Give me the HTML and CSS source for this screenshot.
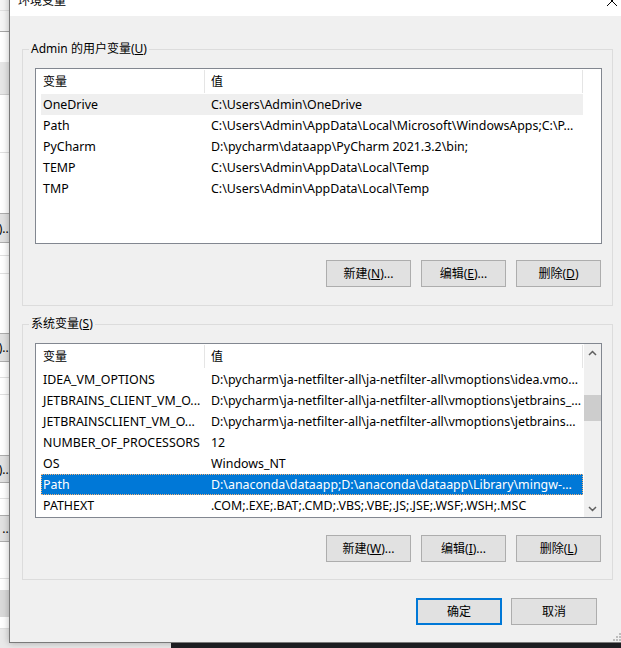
FILE: index.html
```html
<!DOCTYPE html>
<html lang="zh-CN">
<head>
<meta charset="utf-8">
<title>环境变量</title>
<link rel="stylesheet" href="styles.css">
</head>
<body>
<div class="desktop">
  <div class="bgwin">
    <div class="seg h11 bb light"></div>
    <div class="seg h21 bb dark light"></div>
    <div class="seg h30"></div>
    <div class="seg h33 blk"></div>
    <div class="seg h58 bb"></div>
    <div class="seg h60"></div>
    <div class="bbtn h30"><span>(S)...</span></div>
    <div class="seg h13 bb"></div>
    <div class="seg h18 bb"></div>
    <div class="seg h59"></div>
    <div class="bbtn h29"><span>(E)...</span></div>
    <div class="seg h16 bb"></div>
    <div class="seg h17 bb"></div>
    <div class="seg h60"></div>
    <div class="bbtn h28"><span>(D)...</span></div>
    <div class="seg h16 bb"></div>
    <div class="seg h16"></div>
    <div class="bbtn h27"><span>...</span></div>
    <div class="seg h37 bb"></div>
    <div class="seg h11"></div>
    <div class="seg h27 blk2"></div>
    <div class="seg h12 bb"></div>
    <div class="seg rest"></div>
  </div>
  <div class="terminal"></div>

  <div class="dialog">
    <div class="titlebar">
      <span class="title">环境变量</span>
      <svg class="close" viewBox="0 0 10 10"><path d="M0 0L10 10M10 0L0 10" stroke="#000" stroke-width="1" fill="none"/></svg>
    </div>
    <div class="dlg-body">
      <fieldset class="group">
        <legend>Admin 的用户变量(<u>U</u>)</legend>
        <div class="list user">
          <div class="cols">
            <div class="lhead">
              <div class="hcell hname">变量</div>
              <div class="hcell hval">值</div>
            </div>
            <div class="row hover"><div class="cname">OneDrive</div><div class="cval">C:\Users\Admin\OneDrive</div></div>
            <div class="row"><div class="cname">Path</div><div class="cval">C:\Users\Admin\AppData\Local\Microsoft\WindowsApps;C:\P...</div></div>
            <div class="row"><div class="cname">PyCharm</div><div class="cval">D:\pycharm\dataapp\PyCharm 2021.3.2\bin;</div></div>
            <div class="row"><div class="cname">TEMP</div><div class="cval">C:\Users\Admin\AppData\Local\Temp</div></div>
            <div class="row"><div class="cname">TMP</div><div class="cval">C:\Users\Admin\AppData\Local\Temp</div></div>
          </div>
        </div>
        <div class="btns">
          <button class="btn">新建(<u>N</u>)...</button>
          <button class="btn">编辑(<u>E</u>)...</button>
          <button class="btn">删除(<u>D</u>)</button>
        </div>
      </fieldset>

      <fieldset class="group sys">
        <legend>系统变量(<u>S</u>)</legend>
        <div class="list system">
          <div class="cols">
            <div class="lhead">
              <div class="hcell hname">变量</div>
              <div class="hcell hval">值</div>
            </div>
            <div class="row"><div class="cname">IDEA_VM_OPTIONS</div><div class="cval">D:\pycharm\ja-netfilter-all\ja-netfilter-all\vmoptions\idea.vmo...</div></div>
            <div class="row"><div class="cname">JETBRAINS_CLIENT_VM_O...</div><div class="cval">D:\pycharm\ja-netfilter-all\ja-netfilter-all\vmoptions\jetbrains_...</div></div>
            <div class="row"><div class="cname">JETBRAINSCLIENT_VM_O...</div><div class="cval">D:\pycharm\ja-netfilter-all\ja-netfilter-all\vmoptions\jetbrains...</div></div>
            <div class="row"><div class="cname">NUMBER_OF_PROCESSORS</div><div class="cval">12</div></div>
            <div class="row"><div class="cname">OS</div><div class="cval">Windows_NT</div></div>
            <div class="row sel"><div class="cname">Path</div><div class="cval">D:\anaconda\dataapp;D:\anaconda\dataapp\Library\mingw-...</div></div>
            <div class="row"><div class="cname">PATHEXT</div><div class="cval">.COM;.EXE;.BAT;.CMD;.VBS;.VBE;.JS;.JSE;.WSF;.WSH;.MSC</div></div>
          </div>
          <div class="vscroll">
            <div class="sarrow"><svg width="9" height="6" viewBox="0 0 9 6"><path d="M1 5L4.5 1.5L8 5" fill="none" stroke="#606060" stroke-width="1.5"/></svg></div>
            <div class="strack"><div class="thumb"></div></div>
            <div class="sarrow"><svg width="9" height="6" viewBox="0 0 9 6"><path d="M1 1L4.5 4.5L8 1" fill="none" stroke="#606060" stroke-width="1.5"/></svg></div>
          </div>
        </div>
        <div class="btns">
          <button class="btn">新建(<u>W</u>)...</button>
          <button class="btn">编辑(<u>I</u>)...</button>
          <button class="btn">删除(<u>L</u>)</button>
        </div>
      </fieldset>

      <div class="footer">
        <button class="btn wide default">确定</button>
        <button class="btn wide">取消</button>
      </div>
    </div>
    <svg class="grip" width="8" height="8" viewBox="0 0 8 8">
      <rect x="6" y="0" width="2" height="2" fill="#bdbdbd"/>
      <rect x="3" y="3" width="2" height="2" fill="#bdbdbd"/>
      <rect x="6" y="3" width="2" height="2" fill="#bdbdbd"/>
      <rect x="0" y="6" width="2" height="2" fill="#bdbdbd"/>
      <rect x="3" y="6" width="2" height="2" fill="#bdbdbd"/>
      <rect x="6" y="6" width="2" height="2" fill="#bdbdbd"/>
    </svg>
  </div>
</div>
</body>
</html>
```

FILE: styles.css
```css
* { box-sizing: border-box; }
html, body { margin: 0; padding: 0; }
body {
  width: 621px;
  height: 648px;
  overflow: hidden;
  font-family: "Noto Sans", "Noto Sans CJK SC", sans-serif;
  font-size: 12px;
  color: #000;
  background: #fafafa;
}
.desktop {
  position: relative;
  width: 621px;
  height: 648px;
  overflow: hidden;
}

/* background window behind the dialog */
.bgwin {
  position: absolute;
  left: 0;
  top: 0;
  width: 171px;
  height: 648px;
  background: #fff;
  display: flex;
  flex-direction: column;
}
.seg { flex: none; background: #fff; }
.seg.light { background: #f5f5f5; }
.seg.bb { border-bottom: 1px solid #e0e0e0; }
.seg.dark { border-bottom-color: #a6a6a6; }
.seg.blk { background: #e6e6e6; border-bottom: 1px solid #cfcfcf; }
.seg.blk2 { background: #d9d9d9; }
.seg.rest { flex: 1; background: #e9e9e9; }
.bbtn {
  flex: none;
  width: 12px;
  background: #e1e1e1;
  border-top: 1px solid #adadad;
  border-bottom: 1px solid #adadad;
  display: flex;
  justify-content: flex-end;
  align-items: center;
  overflow: hidden;
  white-space: nowrap;
}
.bbtn span { flex: none; }
.h11 { height: 11px; } .h12 { height: 12px; } .h13 { height: 13px; }
.h16 { height: 16px; } .h17 { height: 17px; } .h18 { height: 18px; }
.h21 { height: 21px; } .h27 { height: 27px; } .h28 { height: 28px; }
.h29 { height: 29px; } .h30 { height: 30px; } .h33 { height: 33px; }
.h37 { height: 37px; } .h58 { height: 58px; } .h59 { height: 59px; }
.h60 { height: 60px; }

.terminal {
  position: absolute;
  left: 171px;
  top: 600px;
  right: 0;
  bottom: 0;
  background: #1f2024;
}

/* dialog window */
.dialog {
  position: absolute;
  left: 9px;
  top: -16px;
  width: 614px;
  border: 1px solid #7a7a7a;
  background: #f0f0f0;
  box-shadow: 0 0 7px rgba(0, 0, 0, 0.28);
}
.titlebar {
  height: 31px;
  background: #fff;
  display: flex;
  align-items: center;
  justify-content: space-between;
  padding: 0 5px 0 8px;
}
.title { line-height: 16px; }
.close { width: 10px; height: 10px; display: block; }

.dlg-body { padding: 25px 0 17px 12px; }

.group {
  width: 591px;
  min-width: 0;
  margin: 0;
  border: 1px solid #dcdcdc;
  padding: 11px 10px 18px 12px;
}
.group.sys { margin-top: 10px; padding-bottom: 17px; }
.group legend {
  margin-left: -6px;
  padding: 0 2px;
  line-height: 16px;
}

.list {
  height: 176px;
  border: 1px solid #828790;
  background: #fff;
  display: flex;
}
.list.system { height: 175px; }
.cols {
  width: 548px;
  display: flex;
  flex-direction: column;
}
.lhead { display: flex; height: 25px; flex: none; }
.hcell {
  height: 23px;
  margin-top: 1px;
  line-height: 23px;
  border-right: 1px solid #e5e5e5;
}
.hname { width: 169px; padding-left: 7px; }
.hval { width: 378px; padding-left: 6px; }

.row {
  flex: none;
  display: flex;
  margin-left: 5px;
  width: 542px;
  height: 21px;
  line-height: 21px;
  font-size: 12.4px;
  white-space: nowrap;
}
.row.hover { background: #efefef; }
.row.sel {
  background: #0078d7;
  color: #fff;
  outline: 1px dotted #f0b27a;
  outline-offset: -1px;
}
.cname { width: 164px; padding-left: 2px; overflow: hidden; }
.cval { flex: 1; padding-left: 6px; overflow: hidden; }

.vscroll {
  width: 17px;
  background: #f0f0f0;
  display: flex;
  flex-direction: column;
}
.sarrow {
  height: 17px;
  flex: none;
  display: flex;
  align-items: center;
  justify-content: center;
}
.strack { flex: 1; }
.thumb {
  margin-top: 34px;
  height: 26px;
  background: #cdcdcd;
}

.btns {
  display: flex;
  justify-content: flex-end;
  gap: 10px;
  margin-top: 16px;
  padding-right: 1px;
}
.sys .btns { margin-top: 17px; }
.btn {
  width: 85px;
  height: 27px;
  padding: 0;
  margin: 0;
  background: #e1e1e1;
  border: 1px solid #adadad;
  font-family: inherit;
  font-size: 12px;
  color: #000;
  line-height: 25px;
  text-align: center;
}
.btn.wide { width: 86px; }
.btn.default { border: 2px solid #0078d7; line-height: 23px; }

.footer {
  width: 591px;
  display: flex;
  justify-content: flex-end;
  gap: 9px;
  margin-top: 18px;
  padding-right: 16px;
}

.grip {
  position: absolute;
  right: 1px;
  bottom: 1px;
}
```
